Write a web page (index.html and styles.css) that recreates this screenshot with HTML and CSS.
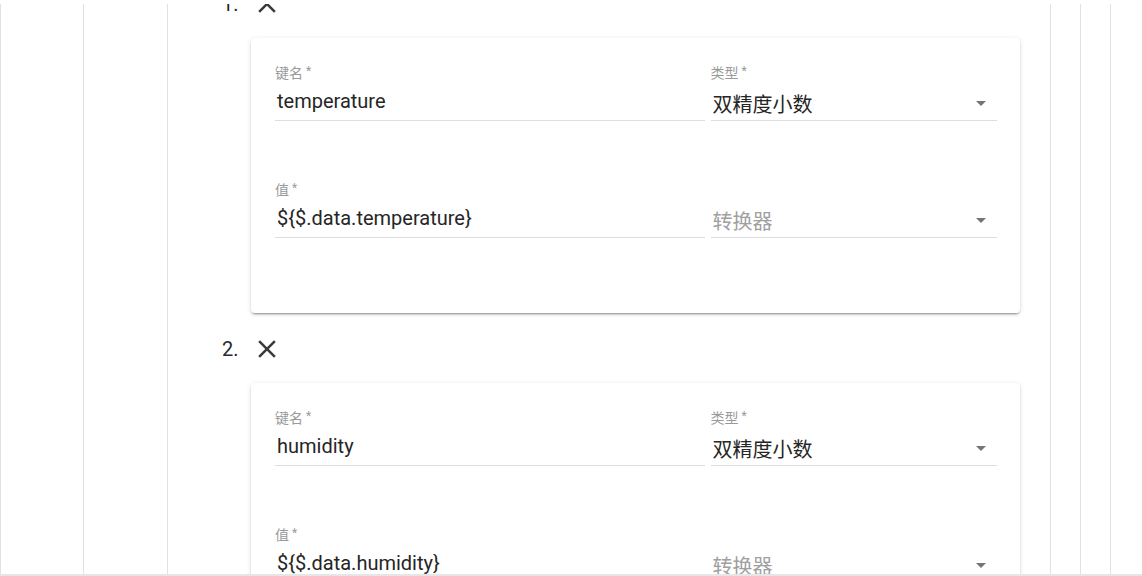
FILE: index.html
```html
<!DOCTYPE html>
<html lang="zh">
<head>
<meta charset="utf-8">
<title>Attributes</title>
<link rel="stylesheet" href="styles.css">
</head>
<body>
<div class="frame">
  <div class="panel l1">
    <div class="panel l2">
      <div class="panel l3">
        <div class="list">
          <div class="item">
            <div class="item-head">
              <span class="num">1.</span>
              <button class="icon-btn" type="button" aria-label="remove">
                <svg viewBox="0 0 24 24" width="30" height="30"><path d="M19 6.41L17.59 5 12 10.59 6.41 5 5 6.41 10.59 12 5 17.59 6.41 19 12 13.41 17.59 19 19 17.59 13.41 12z"/></svg>
              </button>
            </div>
            <div class="card">
              <div class="row">
                <div class="field">
                  <div class="label">键名<span class="req">*</span></div>
                  <div class="value input">temperature</div>
                </div>
                <div class="field">
                  <div class="label">类型<span class="req">*</span></div>
                  <div class="value select"><span>双精度小数</span><span class="arrow"></span></div>
                </div>
              </div>
              <div class="row">
                <div class="field">
                  <div class="label">值<span class="req">*</span></div>
                  <div class="value input">${$.data.temperature}</div>
                </div>
                <div class="field">
                  <div class="label"></div>
                  <div class="value select"><span class="placeholder">转换器</span><span class="arrow"></span></div>
                </div>
              </div>
            </div>
          </div>
          <div class="item">
            <div class="item-head">
              <span class="num">2.</span>
              <button class="icon-btn" type="button" aria-label="remove">
                <svg viewBox="0 0 24 24" width="30" height="30"><path d="M19 6.41L17.59 5 12 10.59 6.41 5 5 6.41 10.59 12 5 17.59 6.41 19 12 13.41 17.59 19 19 17.59 13.41 12z"/></svg>
              </button>
            </div>
            <div class="card">
              <div class="row">
                <div class="field">
                  <div class="label">键名<span class="req">*</span></div>
                  <div class="value input">humidity</div>
                </div>
                <div class="field">
                  <div class="label">类型<span class="req">*</span></div>
                  <div class="value select"><span>双精度小数</span><span class="arrow"></span></div>
                </div>
              </div>
              <div class="row">
                <div class="field">
                  <div class="label">值<span class="req">*</span></div>
                  <div class="value input">${$.data.humidity}</div>
                </div>
                <div class="field">
                  <div class="label"></div>
                  <div class="value select"><span class="placeholder">转换器</span><span class="arrow"></span></div>
                </div>
              </div>
            </div>
          </div>
        </div>
      </div>
    </div>
  </div>
</div>
</body>
</html>
```
FILE: styles.css
```css
* { box-sizing: border-box; }
html, body {
  margin: 0;
  padding: 0;
  background: #fff;
}
body {
  font-family: Roboto, "Noto Sans CJK SC", sans-serif;
  color: #262626;
}
.frame {
  width: 1142px;
  height: 576px;
  overflow: hidden;
  padding-top: 4px;
  border-bottom: 2px solid #e6e6e6;
}
.panel {
  height: 100%;
  overflow: hidden;
  border-left: 1px solid #e1e1e1;
  border-right: 1px solid #e1e1e1;
  background: #fff;
}
.l1 {
  width: 1111px;
  padding: 0 29px 0 82px;
}
.l2 {
  padding: 0 29px 0 83px;
}
.l3 {
  padding: 0 30px 0 54px;
}
.list {
  margin-top: -15px;
}
.item + .item {
  margin-top: 21px;
}
.item-head {
  display: flex;
  align-items: center;
  height: 30px;
  margin-bottom: 19px;
}
.num {
  width: 30px;
  font-size: 20px;
  line-height: 24px;
  color: #2a2a2a;
}
.icon-btn {
  width: 30px;
  height: 30px;
  padding: 0;
  border: 0;
  background: transparent;
  display: flex;
  align-items: center;
  justify-content: center;
}
.icon-btn svg {
  display: block;
  fill: #3a3a3a;
}
.card {
  margin-left: 29px;
  background: #fff;
  border-radius: 4px;
  box-shadow: 0 3px 1px -2px rgba(0,0,0,.2), 0 2px 2px 0 rgba(0,0,0,.14), 0 1px 5px 0 rgba(0,0,0,.12);
  padding: 27px 23px 75px 24px;
}
.row {
  display: grid;
  grid-template-columns: 3fr 2fr;
  column-gap: 6px;
}
.row + .row {
  margin-top: 61px;
}
.label {
  height: 16px;
  font-size: 14px;
  line-height: 16px;
  color: #9a9a9a;
  white-space: nowrap;
}
.req {
  margin-left: 3px;
  font-size: 12px;
  vertical-align: top;
  line-height: 12px;
}
.value {
  font-size: 20px;
  line-height: 24px;
  border-bottom: 1px solid #dedede;
  white-space: nowrap;
}
.value.input {
  margin-top: 8px;
  padding: 0 0 7px 2px;
}
.value.select {
  margin-top: 12px;
  padding: 0 0 3px 2px;
  display: flex;
  justify-content: space-between;
  align-items: flex-start;
}
.placeholder {
  color: #a0a0a0;
}
.arrow {
  width: 0;
  height: 0;
  margin: 8px 11px 0 0;
  border-left: 5px solid transparent;
  border-right: 5px solid transparent;
  border-top: 5px solid #757575;
}
```
